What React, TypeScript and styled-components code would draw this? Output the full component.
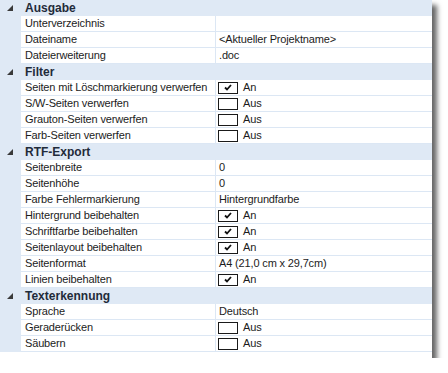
import React from "react";
import styled, { createGlobalStyle } from "styled-components";

const Global = createGlobalStyle`
  html, body { margin: 0; padding: 0; background: #ffffff; }
  body { font-family: "Liberation Sans", Arial, sans-serif; }
`;

const LINE = "#dce7f4";
const BLUE = "#dfe9f5";

const Panel = styled.div`
  width: 432px;
  background: #ffffff;
  padding-bottom: 6px;
  box-shadow: 5px 5px 5px rgba(0, 0, 0, 0.6);
  font-size: 11px;
  letter-spacing: -0.15px;
  color: #1c1c1c;
`;

const HeaderRow = styled.div`
  display: flex;
  align-items: center;
  height: 16px;
  background: ${BLUE};
`;

const Toggle = styled.div`
  width: 21px;
  height: 16px;
  display: flex;
  align-items: center;
  justify-content: center;
  padding-right: 2px;
  box-sizing: border-box;
`;

const Title = styled.span`
  font-weight: bold;
  font-size: 12px;
  letter-spacing: 0;
  color: #1f2b3a;
  padding-left: 4px;
`;

const Row = styled.div`
  display: grid;
  grid-template-columns: 21px 195px 1fr;
  height: 16px;
`;

const Margin = styled.div`
  background: ${BLUE};
`;

const Label = styled.div`
  border-bottom: 1px solid ${LINE};
  border-right: 1px solid ${LINE};
  padding-left: 4px;
  line-height: 15px;
  white-space: nowrap;
  overflow: hidden;
`;

const Value = styled.div`
  border-bottom: 1px solid ${LINE};
  display: flex;
  align-items: center;
  padding-left: 3px;
  line-height: 15px;
  white-space: nowrap;
`;

const Box = styled.span`
  width: 18px;
  height: 10px;
  margin-left: -1px;
  border: 1px solid #1a1a1a;
  display: inline-flex;
  align-items: center;
  justify-content: center;
  margin-right: 5px;
  background: #fff;
`;

const Triangle = () => (
  <svg width="6" height="6" viewBox="0 0 6 6">
    <polygon points="6,0 6,6 0,6" fill="#3a3a3a" />
  </svg>
);

const Check: React.FC<{ on: boolean }> = ({ on }) => (
  <>
    <Box>
      {on && (
        <svg width="8" height="7" viewBox="0 0 8 7">
          <path d="M1 3.5 L3 5.5 L7 1" stroke="#111" strokeWidth="1.8" fill="none" />
        </svg>
      )}
    </Box>
    <span>{on ? "An" : "Aus"}</span>
  </>
);

type Item = { label: string; value?: string; check?: boolean };
type Section = { title: string; items: Item[] };

const data: Section[] = [
  {
    title: "Ausgabe",
    items: [
      { label: "Unterverzeichnis", value: "" },
      { label: "Dateiname", value: "<Aktueller Projektname>" },
      { label: "Dateierweiterung", value: ".doc" },
    ],
  },
  {
    title: "Filter",
    items: [
      { label: "Seiten mit Löschmarkierung verwerfen", check: true },
      { label: "S/W-Seiten verwerfen", check: false },
      { label: "Grauton-Seiten verwerfen", check: false },
      { label: "Farb-Seiten verwerfen", check: false },
    ],
  },
  {
    title: "RTF-Export",
    items: [
      { label: "Seitenbreite", value: "0" },
      { label: "Seitenhöhe", value: "0" },
      { label: "Farbe Fehlermarkierung", value: "Hintergrundfarbe" },
      { label: "Hintergrund beibehalten", check: true },
      { label: "Schriftfarbe beibehalten", check: true },
      { label: "Seitenlayout beibehalten", check: true },
      { label: "Seitenformat", value: "A4 (21,0 cm x 29,7cm)" },
      { label: "Linien beibehalten", check: true },
    ],
  },
  {
    title: "Texterkennung",
    items: [
      { label: "Sprache", value: "Deutsch" },
      { label: "Geraderücken", check: false },
      { label: "Säubern", check: false },
    ],
  },
];

export default function App() {
  return (
    <>
      <Global />
      <Panel>
        {data.map((s) => (
          <React.Fragment key={s.title}>
            <HeaderRow>
              <Toggle>
                <Triangle />
              </Toggle>
              <Title>{s.title}</Title>
            </HeaderRow>
            {s.items.map((it) => (
              <Row key={it.label}>
                <Margin />
                <Label>{it.label}</Label>
                <Value>
                  {it.check !== undefined ? <Check on={it.check} /> : it.value}
                </Value>
              </Row>
            ))}
          </React.Fragment>
        ))}
      </Panel>
    </>
  );
}
